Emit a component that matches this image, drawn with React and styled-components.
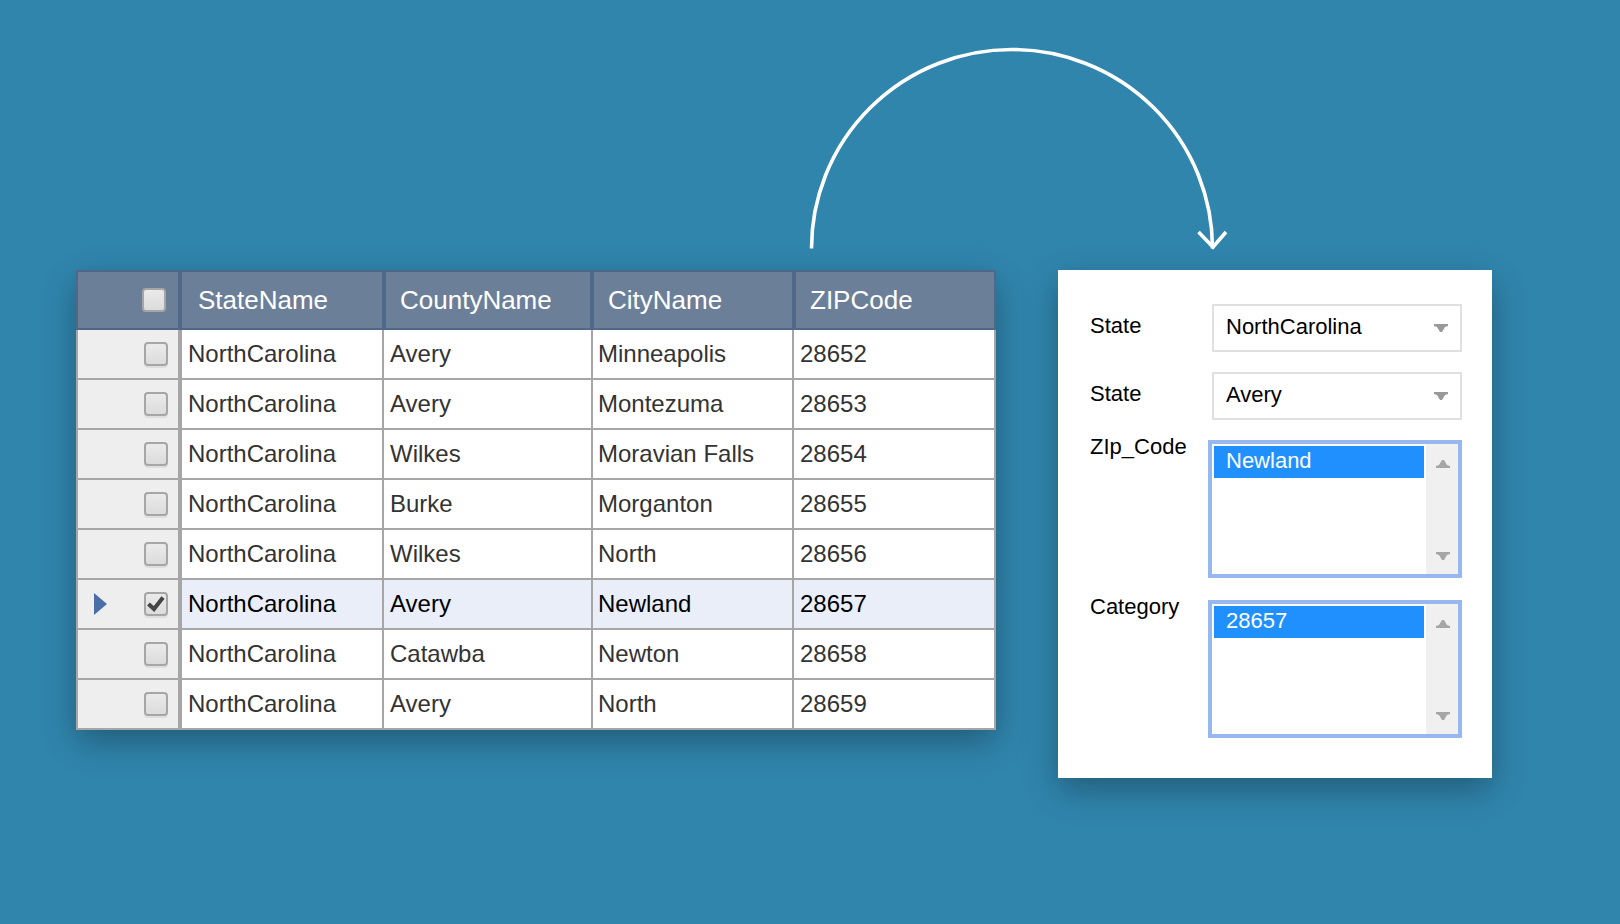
import React from 'react';
import styled, { createGlobalStyle } from 'styled-components';

const GlobalStyle = createGlobalStyle`
  html, body {
    margin: 0;
    padding: 0;
    background: #3085ad;
  }
  * {
    box-sizing: border-box;
  }
`;

const Page = styled.div`
  width: 1620px;
  height: 924px;
  overflow: hidden;
  padding: 40px 0 0 76px;
  background: #3085ad;
  font-family: 'Liberation Sans', Arial, sans-serif;
`;

const ArrowArt = styled.svg`
  display: block;
  margin-left: 730px;
  width: 430px;
  height: 230px;
`;

const Content = styled.div`
  display: flex;
  align-items: flex-start;
  gap: 62px;
`;

const Grid = styled.div`
  width: 920px;
  box-shadow: 0 12px 32px rgba(0, 0, 0, 0.3);
`;

const HeaderRow = styled.div`
  display: flex;
  height: 60px;
  border: 2px solid #4f6889;
  background: #6c7f99;
`;

const HeaderCell = styled.div`
  display: flex;
  align-items: center;
  width: ${({ $width }) => $width}px;
  padding-left: ${({ $inset }) => $inset || 14}px;
  border-right: 4px solid #4f6889;
  color: #fff;
  font-size: 26px;

  &:last-child {
    border-right: 0;
  }
`;

const Corner = styled.div`
  display: flex;
  align-items: center;
  justify-content: flex-end;
  width: 104px;
  padding-right: 12px;
  border-right: 4px solid #4f6889;
`;

const Body = styled.div`
  border: solid #a6a6a6;
  border-width: 0 2px;
  background: #fff;
`;

const Row = styled.div`
  display: flex;
  height: 50px;
  border-bottom: 2px solid #a6a6a6;
  background: ${({ $selected }) => ($selected ? '#e9eef9' : '#fff')};
  color: ${({ $selected }) => ($selected ? '#000' : '#333')};
`;

const RowHead = styled.div`
  display: flex;
  align-items: center;
  justify-content: flex-end;
  width: 104px;
  padding: 0 10px 0 16px;
  border-right: 4px solid #a6a6a6;
  background: #eee;
`;

const Pointer = styled.svg`
  display: block;
  width: 13px;
  height: 22px;
  margin-right: auto;
`;

const Cell = styled.div`
  display: flex;
  align-items: center;
  width: ${({ $width }) => $width}px;
  padding: 0 0 1px ${({ $inset }) => $inset || 6}px;
  border-right: 2px solid #a6a6a6;
  font-size: 24px;

  &:last-child {
    border-right: 0;
  }
`;

const CheckBox = styled.span`
  display: flex;
  align-items: center;
  justify-content: center;
  width: 24px;
  height: 24px;
  border: 2px solid #a6a6a6;
  border-radius: 4px;
  background: linear-gradient(#eaeaea, #dcdcdc);
  box-shadow: ${({ $flat }) => ($flat ? 'none' : '0 2px 0 #dedede')};
`;

const Panel = styled.div`
  display: flex;
  flex-direction: column;
  gap: 20px;
  width: 434px;
  height: 508px;
  padding: 34px 30px 0 32px;
  background: #fff;
  box-shadow: 0 12px 32px rgba(0, 0, 0, 0.3);
`;

const Field = styled.div`
  display: grid;
  grid-template-columns: 118px 254px;
  margin-top: ${({ $top }) => $top || 0}px;
`;

const Label = styled.div`
  margin-top: ${({ $offset }) => $offset}px;
  color: #000;
  font-size: 22px;
  line-height: 26px;
`;

const Select = styled.div`
  display: flex;
  align-items: center;
  justify-content: space-between;
  justify-self: end;
  width: 250px;
  height: 48px;
  padding: 0 12px 2px;
  border: 2px solid #e0e0e0;
  color: #000;
  font-size: 22px;
`;

const Caret = styled.svg`
  display: block;
  width: 14px;
  height: 8px;
  margin-top: 2px;
`;

const ListBox = styled.div`
  display: flex;
  height: 138px;
  border: 4px solid #97b8ef;
  background: #fff;
`;

const ListItems = styled.div`
  flex: 1;
  padding: 2px;
`;

const ListItem = styled.div`
  display: flex;
  align-items: center;
  height: 32px;
  padding: 0 0 2px 12px;
  background: #2090ff;
  color: #fff;
  font-size: 22px;
`;

const ScrollTrack = styled.div`
  display: flex;
  flex-direction: column;
  align-items: center;
  justify-content: space-between;
  width: 32px;
  padding: 16px 0 14px 2px;
  background: #f0f0f0;
`;

const ScrollArrow = styled.svg`
  display: block;
  width: 14px;
  height: 8px;
  transform: ${({ $up }) => ($up ? 'rotate(180deg)' : 'none')};
`;

const rows = [
  ['Avery', 'Minneapolis', '28652'],
  ['Avery', 'Montezuma', '28653'],
  ['Wilkes', 'Moravian Falls', '28654'],
  ['Burke', 'Morganton', '28655'],
  ['Wilkes', 'North', '28656'],
  ['Avery', 'Newland', '28657'],
  ['Catawba', 'Newton', '28658'],
  ['Avery', 'North', '28659'],
];

const caretPoints = '0,0 14,0 14,2 11,3 8,8 6,8 3,3 0,2';

function Check() {
  return (
    <svg width="18" height="16" viewBox="0 0 18 16" aria-hidden="true">
      <path d="M1.5 8 L7 13 L16 1.5" fill="none" stroke="#444" strokeWidth="4" />
    </svg>
  );
}

function Listing({ value }) {
  return (
    <ListBox>
      <ListItems>
        <ListItem>{value}</ListItem>
      </ListItems>
      <ScrollTrack>
        <ScrollArrow $up viewBox="0 0 14 8" aria-hidden="true">
          <polygon points={caretPoints} fill="#a6a6a6" />
        </ScrollArrow>
        <ScrollArrow viewBox="0 0 14 8" aria-hidden="true">
          <polygon points={caretPoints} fill="#a6a6a6" />
        </ScrollArrow>
      </ScrollTrack>
    </ListBox>
  );
}

function Dropdown({ value }) {
  return (
    <Select>
      {value}
      <Caret viewBox="0 0 14 8" aria-hidden="true">
        <polygon points={caretPoints} fill="#999" />
      </Caret>
    </Select>
  );
}

export default function App() {
  return (
    <Page>
      <GlobalStyle />
      <ArrowArt viewBox="0 0 430 230" aria-hidden="true">
        <g fill="none" stroke="#fff" strokeWidth="3.6">
          <path d="M5.5 208.5 A200.5 199 0 0 1 406.5 208.5" />
          <path d="M392.5 192 L407 207 L420 192" />
        </g>
      </ArrowArt>
      <Content>
        <Grid>
          <HeaderRow>
            <Corner>
              <CheckBox $flat />
            </Corner>
            <HeaderCell $width={204} $inset={16}>StateName</HeaderCell>
            <HeaderCell $width={208}>CountyName</HeaderCell>
            <HeaderCell $width={202}>CityName</HeaderCell>
            <HeaderCell $width={198}>ZIPCode</HeaderCell>
          </HeaderRow>
          <Body>
            {rows.map(([county, city, zip]) => {
              const selected = zip === '28657';
              return (
                <Row key={zip} $selected={selected}>
                  <RowHead>
                    {selected && (
                      <Pointer viewBox="0 0 13 22" aria-hidden="true">
                        <polygon points="0,0 13,11 0,22" fill="#4a6fa8" />
                      </Pointer>
                    )}
                    <CheckBox>{selected && <Check />}</CheckBox>
                  </RowHead>
                  <Cell $width={202}>NorthCarolina</Cell>
                  <Cell $width={209}>{county}</Cell>
                  <Cell $width={201} $inset={5}>{city}</Cell>
                  <Cell $width={200}>{zip}</Cell>
                </Row>
              );
            })}
          </Body>
        </Grid>
        <Panel>
          <Field>
            <Label $offset={9}>State</Label>
            <Dropdown value="NorthCarolina" />
          </Field>
          <Field>
            <Label $offset={9}>State</Label>
            <Dropdown value="Avery" />
          </Field>
          <Field>
            <Label $offset={-6}>ZIp_Code</Label>
            <Listing value="Newland" />
          </Field>
          <Field $top={2}>
            <Label $offset={-6}>Category</Label>
            <Listing value="28657" />
          </Field>
        </Panel>
      </Content>
    </Page>
  );
}
